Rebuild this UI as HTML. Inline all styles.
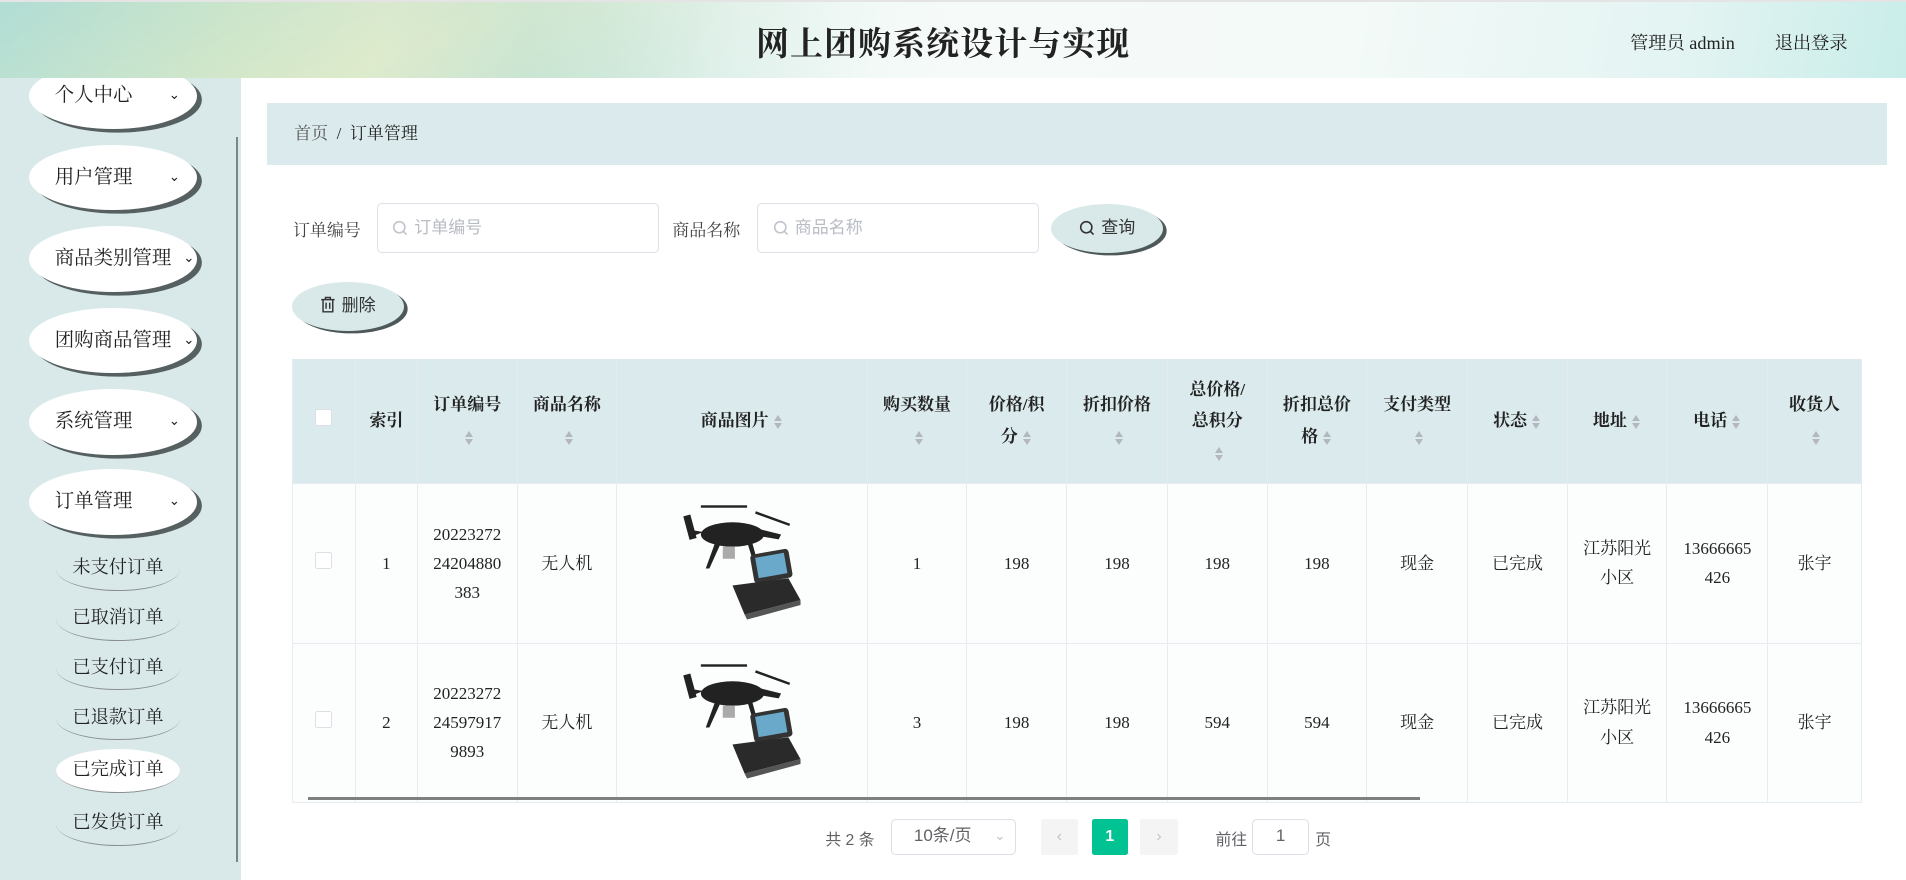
<!DOCTYPE html>
<html><head><meta charset="utf-8"><style>
*{box-sizing:border-box;margin:0;padding:0}
html,body{width:1906px;height:880px;overflow:hidden;background:#fff}
#w{zoom:1.21556;width:1568px;height:724px;position:relative;font-family:"Liberation Serif","Noto Serif CJK SC",serif;color:#222}
.a{position:absolute}
#hd{left:0;top:0;width:1568px;height:64px;border-top:2px solid #e4e4e4;background:linear-gradient(100deg,#bfe3dc 0%,#d8ead0 12%,#e6eed6 20%,#cfe7dc 28%,#e9f5f1 38%,#f6fbf9 50%,#f4faf8 70%,#e3f4f2 88%,#c9ede9 100%);z-index:5}
#hd2{z-index:6;left:0;top:2px;width:700px;height:62px;background:linear-gradient(160deg,rgba(150,210,200,.35),rgba(210,230,190,.4) 50%,rgba(160,215,205,.3));-webkit-mask-image:linear-gradient(90deg,#000 70%,transparent)}
#sb{left:0;top:64px;width:198px;height:660px;background:#d9e9ea}
.m{position:absolute;left:24px;width:138px;height:54px;border-radius:50%;background:#fff;box-shadow:4px 3px 0 #566060;font-size:16px;line-height:54px;padding-left:21px}
.m i{position:absolute;right:14px;top:0;font-style:normal;font-size:11px;font-family:"DejaVu Sans",sans-serif}
.s{position:absolute;left:46px;width:102px;height:36px;border-radius:50%;border-bottom:1px solid #8a9090;font-size:15px;line-height:34px;text-align:center}
th,td{border-right:1px solid #e8ecf2;border-bottom:1px solid #e8ecf2;text-align:center;vertical-align:middle;font-size:14px}
th{background:#dbeaec;font-weight:bold;height:103px;line-height:26px}
td{height:131px;background:#fcfdfd;line-height:24px}
table{border-collapse:collapse;table-layout:fixed;position:absolute;left:240px;top:295px;border-left:1px solid #e8ecf2}
.ar{display:inline-block;width:8px;height:14px;vertical-align:middle;position:relative;margin-left:4px}
.ar:before{content:"";position:absolute;left:0;top:1px;border:4px solid transparent;border-bottom:5px solid #b3b8c0;border-top:0}
.ar:after{content:"";position:absolute;left:0;top:8px;border:4px solid transparent;border-top:5px solid #b3b8c0;border-bottom:0}
.cb{display:inline-block;width:14px;height:14px;border:1px solid #dcdfe6;background:#fff;border-radius:2px}
.inp{border:1px solid #dcdfe6;border-radius:4px;background:#fff;height:41px;color:#b8bcc4;font-size:14px;line-height:39px;padding-left:12px;font-family:"Liberation Sans","Noto Sans CJK SC",sans-serif}
.inp svg,.btn svg{vertical-align:-2px;margin-right:5px}
.btn{border-radius:50%;background:#d9e9ea;box-shadow:3px 2px 0 #4d5858;height:40px;width:92px;font-size:14px;line-height:40px;text-align:center;font-family:"Liberation Sans","Noto Sans CJK SC",sans-serif;color:#333}
.pg{font-family:"Liberation Sans","Noto Sans CJK SC",sans-serif;font-size:13px;color:#606266}
</style></head><body><div id="w">
<div id="hd" class="a"></div>
<div id="hd2" class="a"></div>
<div class="a" style="z-index:7;left:622px;top:15px;font-size:27px;font-weight:bold;letter-spacing:1px">网上团购系统设计与实现</div>
<div class="a" style="z-index:7;left:1341px;top:24px;font-size:15px">管理员 admin</div>
<div class="a" style="z-index:7;left:1460px;top:24px;font-size:15px">退出登录</div>
<div id="sb" class="a"></div>
<div class="a" style="left:194px;top:113px;width:2px;height:596px;background:#7d8686"></div>
<div class="m" style="top:52px;padding-top:0">个人中心<i>⌄</i></div>
<div class="m" style="top:119px">用户管理<i>⌄</i></div>
<div class="m" style="top:186px">商品类别管理<i style="right:2px">⌄</i></div>
<div class="m" style="top:253px">团购商品管理<i style="right:2px">⌄</i></div>
<div class="m" style="top:320px">系统管理<i>⌄</i></div>
<div class="m" style="top:386px">订单管理<i>⌄</i></div>
<div class="s" style="top:450px">未支付订单</div>
<div class="s" style="top:491px">已取消订单</div>
<div class="s" style="top:532px">已支付订单</div>
<div class="s" style="top:573px">已退款订单</div>
<div class="s" style="top:616px;background:#fff">已完成订单</div>
<div class="s" style="top:660px">已发货订单</div>
<div class="a" style="left:220px;top:85px;width:1332px;height:51px;background:#dbeaec;font-size:14px;line-height:51px;padding-left:22px"><span style="color:#555">首页</span>&nbsp;&nbsp;/&nbsp;&nbsp;订单管理</div>
<div class="a" style="left:241px;top:178px;font-size:14px;color:#444">订单编号</div>
<div class="a inp" style="left:310px;top:167px;width:232px"><svg width="13" height="13" viewBox="0 0 13 13" fill="none" stroke="#c0c4cc" stroke-width="1.3"><circle cx="6" cy="6" r="4.6"/><path d="M9.4 9.4L12 12"/></svg>订单编号</div>
<div class="a" style="left:553px;top:178px;font-size:14px;color:#444">商品名称</div>
<div class="a inp" style="left:623px;top:167px;width:232px"><svg width="13" height="13" viewBox="0 0 13 13" fill="none" stroke="#c0c4cc" stroke-width="1.3"><circle cx="6" cy="6" r="4.6"/><path d="M9.4 9.4L12 12"/></svg>商品名称</div>
<div class="a btn" style="left:865px;top:168px"><svg width="13" height="13" viewBox="0 0 13 13" fill="none" stroke="#333" stroke-width="1.3"><circle cx="6" cy="6" r="4.6"/><path d="M9.4 9.4L12 12"/></svg>查询</div>
<div class="a btn" style="left:240px;top:232px"><svg width="13" height="14" viewBox="0 0 13 14" fill="none" stroke="#333" stroke-width="1.2"><path d="M1 3h11M4.5 3V1.2h4V3M2.5 3v10h8V3M5 5.5v5M8 5.5v5"/></svg>删除</div>
<table>
<colgroup><col style="width:52px"><col style="width:51px"><col style="width:82px"><col style="width:82px"><col style="width:206px"><col style="width:82px"><col style="width:82px"><col style="width:83px"><col style="width:82px"><col style="width:82px"><col style="width:83px"><col style="width:82px"><col style="width:82px"><col style="width:83px"><col style="width:77px"></colgroup>
<tr><th><span class="cb"></span></th><th>索引</th><th>订单编号<br><span class="ar"></span></th><th>商品名称<br><span class="ar"></span></th><th>商品图片<span class="ar"></span></th><th>购买数量<br><span class="ar"></span></th><th>价格/积<br>分<span class="ar"></span></th><th>折扣价格<br><span class="ar"></span></th><th>总价格/<br>总积分<br><span class="ar"></span></th><th>折扣总价<br>格<span class="ar"></span></th><th>支付类型<br><span class="ar"></span></th><th>状态<span class="ar"></span></th><th>地址<span class="ar"></span></th><th>电话<span class="ar"></span></th><th>收货人<br><span class="ar"></span></th></tr>
<tr><td><span class="cb"></span></td><td>1</td><td>20223272<br>24204880<br>383</td><td>无人机</td><td><svg width="104" height="100" viewBox="0 0 104 100"><g fill="#222"><rect x="18" y="6" width="38" height="2"/><rect x="62" y="16" width="30" height="2" transform="rotate(20 77 17)"/><rect x="6" y="14" width="6" height="20" transform="rotate(-15 9 24)"/><ellipse cx="44" cy="30" rx="26" ry="10"/><path d="M20 28 L8 26 L10 32 Z M60 24 L84 30 L82 34 L58 30Z"/><path d="M30 36 L22 58 L25 58 L34 38Z M56 36 L64 62 L67 61 L60 36Z"/></g><rect x="36" y="40" width="10" height="10" fill="#aaa"/><rect x="60" y="44" width="32" height="24" rx="3" fill="#333" transform="rotate(-10 76 56)"/><rect x="64" y="47" width="24" height="17" fill="#6aa9c9" transform="rotate(-10 76 56)"/><path d="M44 72 L90 66 L100 84 L54 96 Z" fill="#2a2a2a"/><path d="M54 96 L100 84 L100 88 L56 100Z" fill="#555"/></svg></td><td>1</td><td>198</td><td>198</td><td>198</td><td>198</td><td>现金</td><td>已完成</td><td>江苏阳光<br>小区</td><td>13666665<br>426</td><td>张宇</td></tr>
<tr><td><span class="cb"></span></td><td>2</td><td>20223272<br>24597917<br>9893</td><td>无人机</td><td><svg width="104" height="100" viewBox="0 0 104 100"><g fill="#222"><rect x="18" y="6" width="38" height="2"/><rect x="62" y="16" width="30" height="2" transform="rotate(20 77 17)"/><rect x="6" y="14" width="6" height="20" transform="rotate(-15 9 24)"/><ellipse cx="44" cy="30" rx="26" ry="10"/><path d="M20 28 L8 26 L10 32 Z M60 24 L84 30 L82 34 L58 30Z"/><path d="M30 36 L22 58 L25 58 L34 38Z M56 36 L64 62 L67 61 L60 36Z"/></g><rect x="36" y="40" width="10" height="10" fill="#aaa"/><rect x="60" y="44" width="32" height="24" rx="3" fill="#333" transform="rotate(-10 76 56)"/><rect x="64" y="47" width="24" height="17" fill="#6aa9c9" transform="rotate(-10 76 56)"/><path d="M44 72 L90 66 L100 84 L54 96 Z" fill="#2a2a2a"/><path d="M54 96 L100 84 L100 88 L56 100Z" fill="#555"/></svg></td><td>3</td><td>198</td><td>198</td><td>594</td><td>594</td><td>现金</td><td>已完成</td><td>江苏阳光<br>小区</td><td>13666665<br>426</td><td>张宇</td></tr>
</table>
<div class="a" style="left:253px;top:656px;width:915px;height:2px;background:#7f7f7f"></div>
<div class="a pg" style="left:679px;top:680px">共 2 条</div>
<div class="a pg" style="left:733px;top:674px;width:103px;height:29px;border:1px solid #dcdfe6;border-radius:4px;line-height:27px;padding-left:18px;font-size:14px">10条/页<span style="position:absolute;right:8px;color:#c0c4cc;font-size:11px">⌄</span></div>
<div class="a pg" style="left:856px;top:674px;width:31px;height:29px;background:#f4f4f5;border-radius:2px;text-align:center;line-height:29px;color:#c0c4cc">‹</div>
<div class="a pg" style="left:898px;top:674px;width:30px;height:29px;background:#00c292;border-radius:2px;text-align:center;line-height:29px;color:#fff;font-weight:bold">1</div>
<div class="a pg" style="left:938px;top:674px;width:31px;height:29px;background:#f4f4f5;border-radius:2px;text-align:center;line-height:29px;color:#c0c4cc">›</div>
<div class="a pg" style="left:1000px;top:680px">前往</div>
<div class="a pg" style="left:1030px;top:674px;width:47px;height:29px;border:1px solid #dcdfe6;border-radius:4px;text-align:center;line-height:27px;font-size:14px">1</div>
<div class="a pg" style="left:1082px;top:680px">页</div>
</div></body></html>
